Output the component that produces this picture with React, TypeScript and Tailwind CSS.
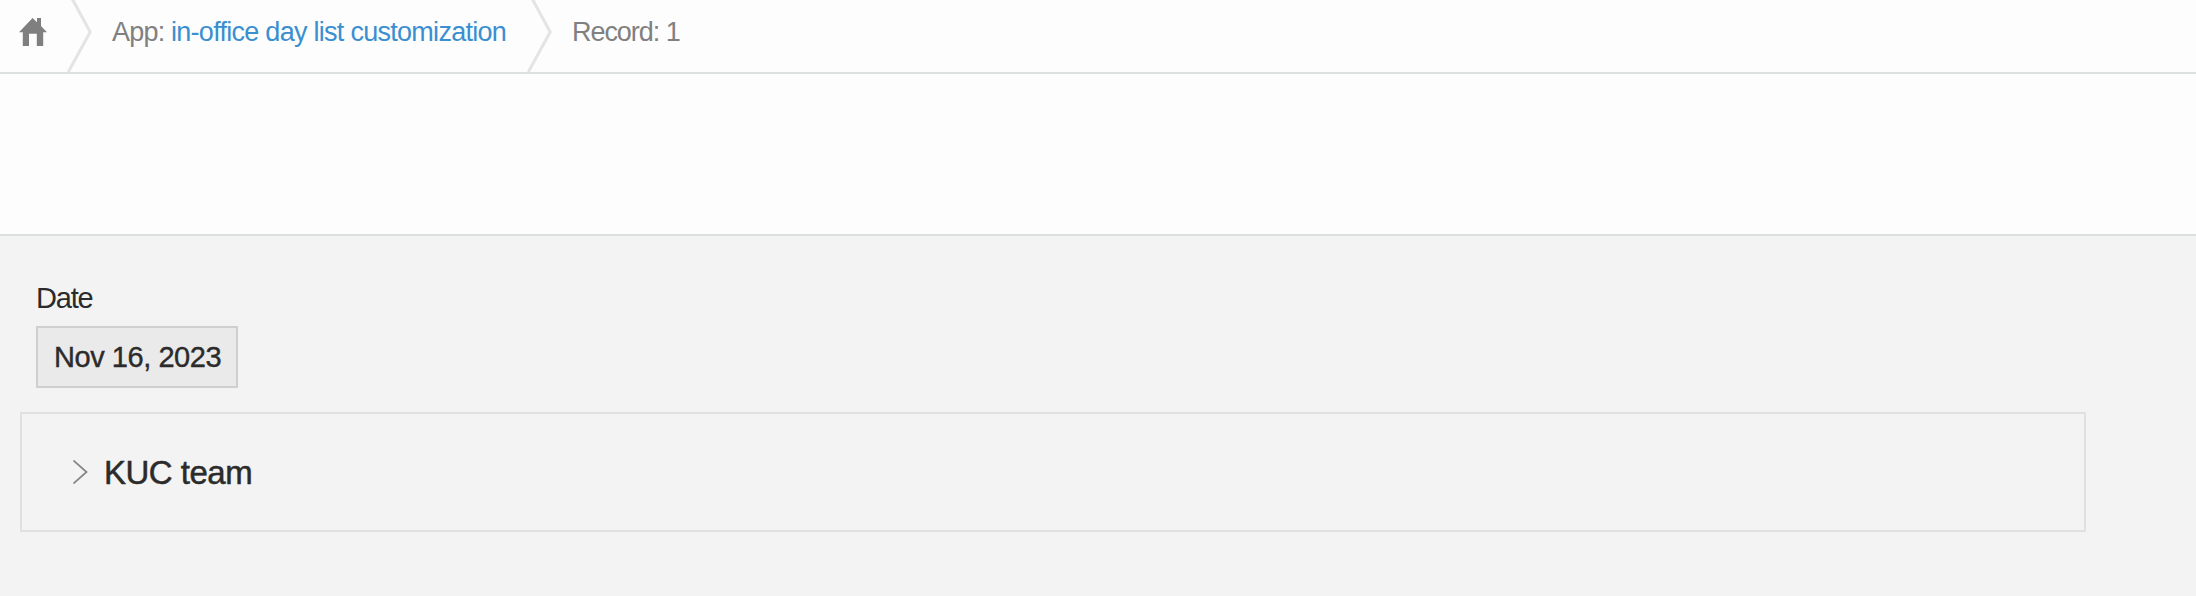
function Separator() {
  return (
    <svg className="h-[72px] w-[26px] shrink-0" viewBox="0 0 26 72" fill="none" stroke="#e2e5e4" strokeWidth="3">
      <path d="M5 -1.5 L23.2 32 L1.3 72" />
    </svg>
  );
}

function HomeIcon() {
  return (
    <svg className="mt-[18px] h-7 w-7 shrink-0" viewBox="0 0 28 28" fill="#7f7f7f">
      <path d="M0 14.2 L13.6 0 L18 4.2 V0 H22 V8 L28 14.2 H24.2 V28 H17.8 V15.8 H10 V28 H3.8 V14.2 Z" />
    </svg>
  );
}

export default function App() {
  return (
    <div className="flex h-[596px] w-full flex-col overflow-hidden bg-[#fdfdfd] font-['Liberation_Sans',Arial,sans-serif] text-[#2b2b2b]">
      <nav className="flex h-[74px] shrink-0 items-start border-b-2 border-[#dce0df] pl-[19px] text-[27px] leading-[32px] whitespace-nowrap text-[#808080]">
        <HomeIcon />
        <div className="ml-5 flex">
          <Separator />
        </div>
        <div className="ml-[19px] flex w-[415px] items-start pt-4">
          <span className="w-[59px] tracking-[-0.8px]">App:</span>
          <a className="tracking-[-0.72px] text-[#3a8fd0]">in-office day list customization</a>
        </div>
        <div className="flex">
          <Separator />
        </div>
        <span className="ml-[19px] pt-4 tracking-[-1.05px]">Record: 1</span>
      </nav>
      <div className="h-40 shrink-0" />
      <main className="flex-1 border-t-2 border-[#dce0df] bg-[#f3f3f3] pt-[45px] pl-5">
        <div className="ml-4">
          <div className="h-[45px] text-[29px] leading-[34px] tracking-[-1.2px]">Date</div>
          <div className="flex h-[62px] w-[202px] items-center border-2 border-[#cfcfcf] bg-[#eaeaea] pl-4 text-[29px] leading-[34px] tracking-[-0.45px] whitespace-nowrap [-webkit-text-stroke:0.4px_#2b2b2b]">
            Nov 16, 2023
          </div>
        </div>
        <section className="mt-6 flex h-[120px] w-[2066px] items-center border-2 border-[#dfe1e0] pl-[51px]">
          <svg className="h-6 w-[15px]" viewBox="0 0 15 24" fill="none" stroke="#888888" strokeWidth="1.8">
            <path d="M0.5 0.5 L13.5 12 L0.5 23.5" />
          </svg>
          <h2 className="ml-4 pt-0.5 text-[33px] leading-[38px] tracking-[-0.5px] [-webkit-text-stroke:0.5px_#2b2b2b]">KUC team</h2>
        </section>
      </main>
    </div>
  );
}
